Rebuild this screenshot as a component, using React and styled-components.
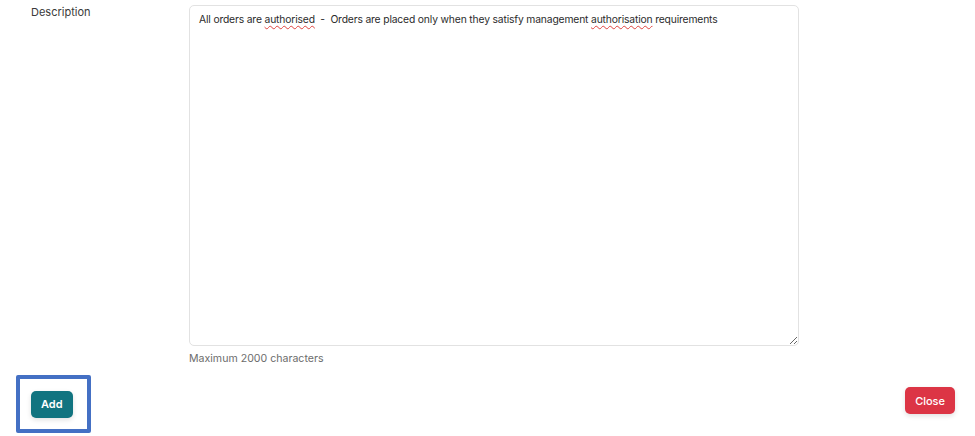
import React from 'react';
import styled, { createGlobalStyle } from 'styled-components';

const GlobalStyle = createGlobalStyle`
  html, body {
    margin: 0;
    padding: 0;
    background: #ffffff;
    font-family: Inter, "Open Sans", "Liberation Sans", sans-serif;
  }
`;

const Page = styled.div`
  width: 975px;
  height: 436px;
  display: flex;
  flex-direction: column;
  box-sizing: border-box;
  padding-top: 5px;
`;

const FormRow = styled.div`
  display: flex;
  align-items: flex-start;
`;

const Label = styled.label`
  width: 158px;
  padding-left: 31px;
  font-size: 11px;
  color: #3a3a3a;
  line-height: 14px;
`;

const Field = styled.div`
  width: 610px;
  display: flex;
  flex-direction: column;
`;

const TextBox = styled.div`
  height: 341px;
  box-sizing: border-box;
  border: 1px solid #e2e2e2;
  border-radius: 5px;
  padding: 6px 9px;
  font-size: 10.3px;
  letter-spacing: -0.15px;
  line-height: 14px;
  color: #2b2b2b;
  white-space: pre-wrap;
  resize: vertical;
  overflow: auto;
`;

const Misspelt = styled.span`
  text-decoration: underline wavy #e0433f;
  text-decoration-thickness: 1px;
  text-underline-offset: 2px;
`;

const Hint = styled.div`
  margin-top: 6px;
  font-size: 10.6px;
  color: #6c6c6c;
`;

const Footer = styled.div`
  margin-top: auto;
  display: flex;
  justify-content: space-between;
  align-items: flex-end;
  padding: 0 20px 3px 16px;
`;

const Highlight = styled.div`
  width: 75px;
  height: 58px;
  box-sizing: border-box;
  border: 4px solid #4470c4;
  border-radius: 2px;
  display: flex;
  align-items: center;
  padding-left: 11px;
`;

const Button = styled.button`
  height: 27px;
  padding: 0 ${p => p.$px}px;
  border: none;
  border-radius: 5px;
  background: ${p => p.$bg};
  color: #ffffff;
  font-family: inherit;
  font-size: 11px;
  font-weight: ${p => p.$bold ? 600 : 500};
  box-shadow: 0 2px 5px rgba(0, 0, 0, 0.12);
  margin-bottom: ${p => p.$mb || 0}px;
`;

export default function App() {
  return (
    <Page>
      <GlobalStyle />
      <FormRow>
        <Label>Description</Label>
        <Field>
          <TextBox>
            All orders are <Misspelt>authorised</Misspelt>{'  -  '}Orders are placed only when they satisfy management <Misspelt>authorisation</Misspelt> requirements
          </TextBox>
          <Hint>Maximum 2000 characters</Hint>
        </Field>
      </FormRow>
      <Footer>
        <Highlight>
          <Button $bg="#117480" $px={10} $bold>Add</Button>
        </Highlight>
        <Button $bg="#dc3545" $px={10} $mb={19}>Close</Button>
      </Footer>
    </Page>
  );
}
